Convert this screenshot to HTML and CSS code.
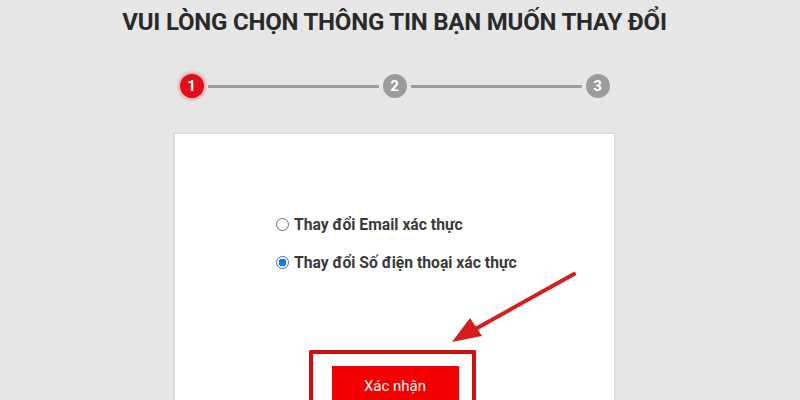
FILE: index.html
```html
<!DOCTYPE html>
<html lang="vi">
<head>
<meta charset="utf-8">
<link rel="stylesheet" href="styles.css">
</head>
<body>
<main class="page">
  <h1 class="title">VUI LÒNG CHỌN THÔNG TIN BẠN MUỐN THAY ĐỔI</h1>
  <div class="stepper">
    <span class="step active">1</span>
    <span class="line"></span>
    <span class="step">2</span>
    <span class="line"></span>
    <span class="step">3</span>
  </div>
  <section class="card">
    <div class="options">
      <label class="option"><span class="radio"></span>Thay đổi Email xác thực</label>
      <label class="option"><span class="radio checked"></span>Thay đổi Số điện thoại xác thực</label>
    </div>
    <div class="actions">
      <button class="btn">Xác nhận</button>
      <span class="highlight"></span>
    </div>
    <svg class="arrow" width="140" height="90" viewBox="0 0 140 90">
      <line x1="128" y1="8" x2="24" y2="66" stroke="#d71c1c" stroke-width="4" stroke-linecap="round"/>
      <polygon points="6,76 24,52 36,70" fill="#d71c1c"/>
    </svg>
  </section>
</main>
</body>
</html>
```

FILE: styles.css
```css
html, body {
  margin: 0;
  padding: 0;
  background: #e6e6e6;
  height: 100%;
  overflow: hidden;
}
.page {
  display: flex;
  flex-direction: column;
  align-items: center;
  padding-right: 11px;
  font-family: Roboto, "Liberation Sans", sans-serif;
}
.title {
  margin: 8px 0 0 0;
  font-size: 24px;
  font-weight: 700;
  color: #2a2a2a;
  letter-spacing: -0.2px;
  line-height: 28px;
}
.stepper {
  display: flex;
  align-items: center;
  width: 430px;
  margin: 38px 0 0 0;
}
.step {
  flex: none;
  width: 24px;
  height: 24px;
  border-radius: 50%;
  background: #9b9b9b;
  color: #fff;
  font-size: 15px;
  font-weight: 700;
  display: flex;
  align-items: center;
  justify-content: center;
}
.step.active {
  background: #e10f1a;
  box-shadow: 0 0 3px 2px rgba(255, 120, 130, 0.55);
}
.line {
  flex: 1;
  height: 3px;
  background: #9d9d9d;
  margin: 0 4px;
}
.card {
  position: relative;
  margin: 35px 0 0 0;
  width: 441px;
  height: 267px;
  background: #fff;
  border: 1px solid #d8d8d8;
  border-bottom: none;
  box-shadow: 0 0 2px rgba(0,0,0,0.08);
  box-sizing: border-box;
}
.options {
  display: flex;
  flex-direction: column;
  gap: 20px;
  padding: 81px 0 0 101px;
}
.option {
  display: flex;
  align-items: center;
  gap: 5px;
  font-size: 15.7px;
  font-weight: 700;
  color: #3a3a3a;
  height: 18px;
}
.radio {
  width: 11px;
  height: 11px;
  border: 1px solid #6b6b6b;
  border-radius: 50%;
  background: #fff;
}
.radio.checked {
  border-color: #1a73e8;
  background: radial-gradient(circle, #1a73e8 0 3.6px, #fff 4px);
}
.actions {
  position: relative;
  display: flex;
  justify-content: center;
  margin-top: 95px;
  margin-left: 1px;
  height: 34px;
  overflow: visible;
}
.btn {
  flex: none;
  width: 127px;
  height: 34px;
  border: none;
  background: #f20000;
  color: #fff;
  font-family: Roboto, "Liberation Sans", sans-serif;
  font-size: 15px;
  padding: 5px 0 0 0;
}
.highlight {
  position: absolute;
  left: 133px;
  top: -16px;
  width: 159px;
  height: 46px;
  border: 4px solid #d40d0d;
  border-bottom: none;
  border-radius: 2px 2px 0 0;
}
.arrow {
  position: absolute;
  left: 271px;
  top: 132px;
}
```
